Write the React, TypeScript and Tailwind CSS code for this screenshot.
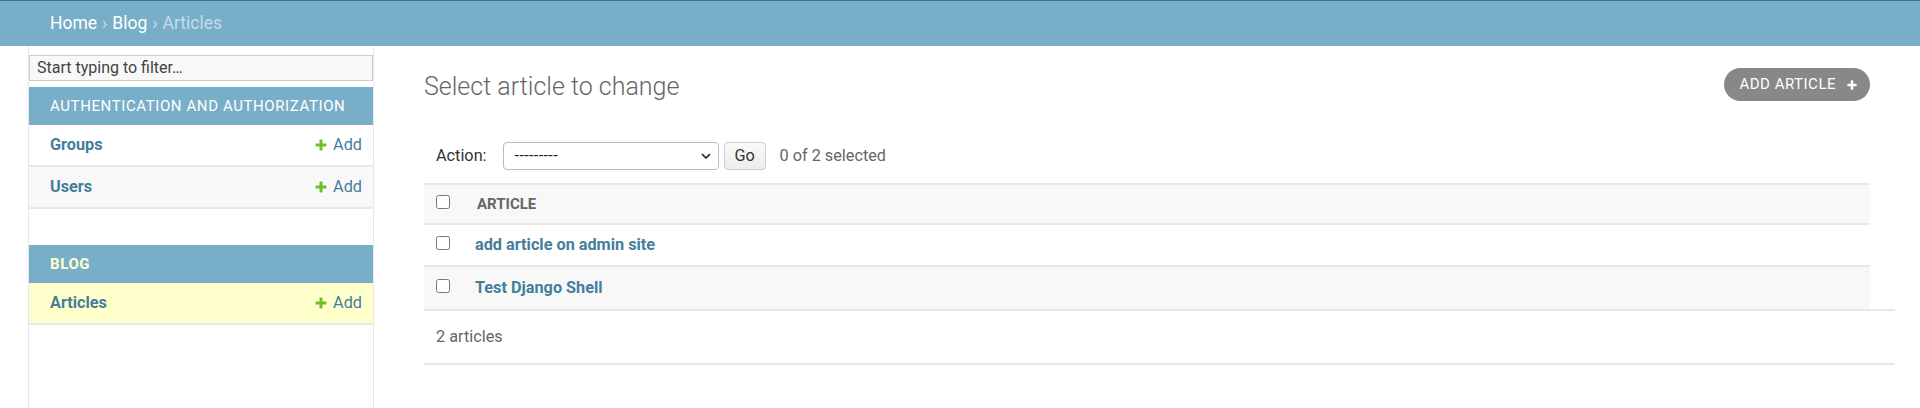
import React from "react";

const PLUS =
  "M1600 796v192q0 40-28 68t-68 28h-416v416q0 40-28 68t-68 28h-192q-40 0-68-28t-28-68v-416h-416q-40 0-68-28t-28-68v-192q0-40 28-68t68-28h416v-416q0-40 28-68t68-28h192q40 0 68 28t28 68v416h416q40 0 68 28t28 68z";

function PlusIcon({ className }: { className?: string }) {
  return (
    <svg viewBox="0 0 1792 1792" className={className} fill="currentColor">
      <path d={PLUS} />
    </svg>
  );
}

function ModelRow({ name, shaded, current }: { name: string; shaded?: boolean; current?: boolean }) {
  return (
    <div
      className={
        "flex items-center justify-between h-[42px] pl-[21px] pr-[11px] border-b-2 border-[#e8e8e8] " +
        (current ? "bg-[#ffffcc]" : shaded ? "bg-[#f8f8f8]" : "bg-white")
      }
    >
      <span className="text-[16.25px] font-bold text-[#447e9b]">{name}</span>
      <span className="flex items-center gap-[5px] text-[16.25px] text-[#447e9b]">
        <PlusIcon className="w-[14px] h-[14px] text-[#70bf2b]" />
        Add
      </span>
    </div>
  );
}

function Caption({ label, current }: { label: string; current?: boolean }) {
  return (
    <div
      className={
        "h-[38px] flex items-center pl-[21px] bg-[#79aec8] text-[15px] uppercase tracking-[0.6px] " +
        (current ? "font-bold text-[#ffffcc]" : "text-white")
      }
    >
      {label}
    </div>
  );
}

function Check() {
  return <input type="checkbox" className="w-[14px] h-[14px] m-0 mb-[4px] shrink-0" />;
}

export default function App() {
  return (
    <div className="w-[1920px] h-[408px] overflow-hidden bg-white text-[#333] font-['Roboto',sans-serif]">
      <div className="h-px bg-[#417690]" />
      {/* Breadcrumbs */}
      <div className="h-[45px] bg-[#79aec8] flex items-center px-[50px] text-[17.5px] text-[#c4dce8]">
        <span className="text-white">Home</span>
        <span className="mx-[5px]">›</span>
        <span className="text-white">Blog</span>
        <span className="mx-[5px]">›</span>
        <span>Articles</span>
      </div>

      <div className="flex h-[362px]">
        {/* sidebar toggle */}
        <div className="w-[29px] border-r border-[#e8e8e8]" />

        {/* Nav sidebar */}
        <nav className="w-[345px] border-r border-[#e8e8e8] pt-[9px]">
          <div className="h-[26px] border border-[#cccccc] bg-[#f8f8f8] flex items-center pl-[7px] text-[16px] text-[#444]">
            Start typing to filter…
          </div>
          <div className="mt-[6px]">
            <Caption label="Authentication and Authorization" />
            <ModelRow name="Groups" />
            <ModelRow name="Users" shaded />
          </div>
          <div className="mt-[36px]">
            <Caption label="Blog" current />
            <ModelRow name="Articles" current />
          </div>
        </nav>

        {/* Content */}
        <main className="flex-1 pl-[50px] pr-[50px]">
          <div className="flex items-center justify-between mt-[22px] h-[33px]">
            <h1 className="text-[25px] font-light text-[#666] mt-[4px]">Select article to change</h1>
            <a className="flex items-center gap-[10px] h-[33px] pl-[15px] pr-[12px] rounded-full bg-[#888888] text-white text-[15px] uppercase tracking-[0.5px]">
              Add article
              <PlusIcon className="w-[12px] h-[12px]" />
            </a>
          </div>

          {/* Actions */}
          <div className="flex items-center mt-[41px] h-[28px] pl-[12px] text-[16.25px] text-[#333]">
            <span className="text-[#333]">Action:</span>
            <div className="ml-[16px] w-[216px] h-[28px] border border-[#bbbbbb] rounded-[4px] bg-white flex items-center justify-between pl-[11px] pr-[6px]">
              <span className="text-[16px] text-[#222] tracking-[0.4px]">---------</span>
              <svg viewBox="0 0 24 24" className="w-[12px] h-[12px]" fill="none" stroke="#222" strokeWidth="3.5" strokeLinecap="round" strokeLinejoin="round">
                <path d="M5 9l7 7 7-7" />
              </svg>
            </div>
            <div className="ml-[5px] w-[42px] h-[28px] border border-[#cccccc] rounded-[4px] bg-gradient-to-b from-[#fafafa] to-[#ececec] flex items-center justify-center text-[#333]">
              Go
            </div>
            <span className="ml-[14px] text-[#666]">0 of 2 selected</span>
          </div>

          {/* Results table */}
          <div className="mt-[13px] mr-[-25px]">
            <div className="mr-[25px]">
              <div className="flex items-center h-[42px] bg-[#f8f8f8] border-t-2 border-b-2 border-[#e8e8e8] pl-[12px]">
                <Check />
                <span className="ml-[27px] text-[15px] font-bold uppercase text-[#666]">Article</span>
              </div>
              <div className="flex items-center h-[42px] bg-white border-b-2 border-[#e8e8e8] pl-[12px]">
                <Check />
                <span className="ml-[25px] text-[16.25px] font-bold text-[#447e9b]">add article on admin site</span>
              </div>
              <div className="flex items-center h-[42px] bg-[#f8f8f8] pl-[12px]">
                <Check />
                <span className="ml-[25px] text-[16.25px] font-bold text-[#447e9b]">Test Django Shell</span>
              </div>
            </div>
            <div className="h-[56px] border-t-2 border-b-2 border-[#e8e8e8] flex items-center pl-[12px] text-[16.25px] text-[#666]">
              2 articles
            </div>
          </div>
        </main>
      </div>
    </div>
  );
}
